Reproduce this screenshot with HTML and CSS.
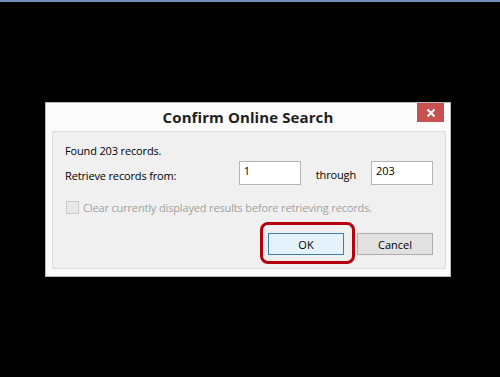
FILE: index.html
```html
<!DOCTYPE html>
<html lang="en">
<head>
    <meta charset="UTF-8">
    <meta name="viewport" content="width=device-width, initial-scale=1.0">
    <title>Confirm Online Search</title>
    <link rel="stylesheet" href="styles.css">
</head>
<body>
    <div class="top-strip"></div>

    <div class="dialog">
        <div class="title-bar">
            <span class="title">Confirm Online Search</span>
            <button class="close-btn" aria-label="Close">
                <svg width="10" height="10" viewBox="0 0 10 10">
                    <path d="M1.5 1.5 L8.5 8.5 M8.5 1.5 L1.5 8.5" stroke="#fff" stroke-width="2" fill="none"/>
                </svg>
            </button>
        </div>

        <div class="panel">
            <div class="found">Found 203 records.</div>
            <div class="range-row">
                <span class="range-label">Retrieve records from:</span>
                <input type="text" class="num-input" value="1">
                <span class="through">through</span>
                <input type="text" class="num-input" value="203">
            </div>
            <label class="check-row">
                <span class="checkbox"></span>
                <span>Clear currently displayed results before retrieving records.</span>
            </label>
            <div class="button-row">
                <span class="highlight">
                    <button class="btn btn-ok">OK</button>
                </span>
                <button class="btn">Cancel</button>
            </div>
        </div>
    </div>
</body>
</html>
```

FILE: styles.css
```css
body {
    margin: 0;
    background-color: #000;
    font-family: "Open Sans", "Noto Sans", sans-serif;
    font-size: 11px;
    letter-spacing: -0.15px;
    color: #000;
    height: 377px;
    overflow: hidden;
}

.top-strip {
    height: 2px;
    background-color: #7390b9;
}

.dialog {
    position: relative;
    box-sizing: border-box;
    width: 406px;
    height: 175px;
    margin: 100px 0 0 45px;
    background-color: #fbfbfb;
    border: 1px solid #b9b9b9;
}

.title-bar {
    height: 28px;
    display: flex;
    justify-content: center;
    align-items: center;
}

.title {
    font-size: 15px;
    font-weight: 700;
    letter-spacing: 0.1px;
    color: #1f1f1f;
}

.close-btn {
    position: absolute;
    top: 0;
    right: 6px;
    width: 27px;
    height: 19px;
    border: none;
    padding: 0;
    background-color: #c75050;
    display: flex;
    align-items: center;
    justify-content: center;
}

.panel {
    box-sizing: border-box;
    width: 394px;
    height: 138px;
    margin-left: 6px;
    background-color: #f0f0f0;
    border: 1px solid #dcdcdc;
    padding: 11px 12px 0 12px;
}

.found {
    line-height: 16px;
}

.range-row {
    display: flex;
    align-items: center;
    margin-top: 2px;
    height: 24px;
}

.range-label {
    width: 174px;
    padding-top: 4px;
}

.num-input {
    box-sizing: border-box;
    width: 62px;
    height: 24px;
    border: 1px solid #b5b5b5;
    background: #fff;
    font-family: inherit;
    font-size: 11px;
    padding: 0 4px 6px 4px;
    margin: 0;
}

.through {
    margin: 0 15px;
    padding-top: 2px;
}

.check-row {
    display: flex;
    align-items: center;
    gap: 4px;
    margin-top: 14px;
    height: 16px;
    color: #a0a0a0;
    padding-left: 1px;
}

.checkbox {
    box-sizing: border-box;
    width: 13px;
    height: 13px;
    border: 1px solid #c8c8c8;
    background-color: #e8e8e8;
}

.button-row {
    display: flex;
    justify-content: flex-end;
    gap: 13px;
    margin-top: 18px;
}

.btn {
    box-sizing: border-box;
    width: 76px;
    height: 22px;
    border: 1px solid #adadad;
    background-color: #e1e1e1;
    font-family: inherit;
    font-size: 11px;
    color: #000;
    padding: 0;
}

.btn-ok {
    border-color: #3c7fb1;
    background-color: #e5f1fb;
}

.highlight {
    position: relative;
    display: flex;
}

.highlight::after {
    content: "";
    position: absolute;
    left: -8px;
    top: -11px;
    right: -11px;
    bottom: -9px;
    border: 3px solid #b5000f;
    border-radius: 8px;
}
```
